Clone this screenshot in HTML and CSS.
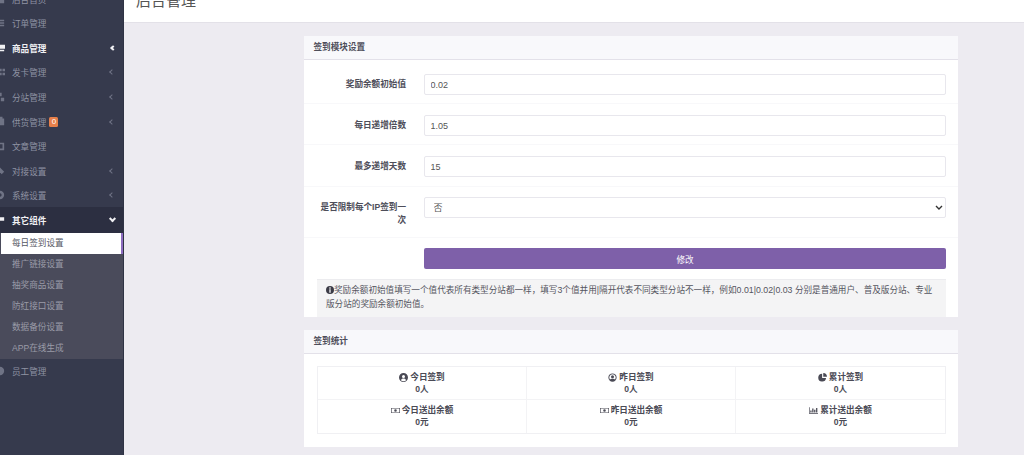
FILE: index.html
```html
<!DOCTYPE html>
<html lang="zh-CN">
<head>
<meta charset="utf-8">
<title>后台管理</title>
<link rel="stylesheet" href="styles.css">
</head>
<body>
<div class="app">
  <nav class="sidebar">
    <a class="item"><svg class="ic" viewBox="0 0 12 12"><path d="M1 6l5-5 5 5v5H1z"/></svg><span>后台首页</span></a>
    <a class="item"><svg class="ic" viewBox="0 0 12 12"><path d="M1 2h10v2H1zM1 5h10v2H1zM1 8h10v2H1z"/></svg><span>订单管理</span></a>
    <a class="item lit"><svg class="ic" viewBox="0 0 12 12"><path d="M0 2h12v5H3v1h8v2H1V4H0z"/></svg><span>商品管理</span><i class="chev left"></i></a>
    <a class="item"><svg class="ic" viewBox="0 0 12 12"><path d="M1 2h3v3H1zM5 2h3v3H5zM9 2h3v3H9zM1 7h3v3H1zM5 7h3v3H5zM9 7h3v3H9z"/></svg><span>发卡管理</span><i class="chev left"></i></a>
    <a class="item"><svg class="ic" viewBox="0 0 12 12"><path d="M4 1h4v4H4zM1 7h4v4H1zM7 7h4v4H7z"/></svg><span>分站管理</span><i class="chev left"></i></a>
    <a class="item"><svg class="ic" viewBox="0 0 12 12"><path d="M1 3h10v8H1zM3 1h6v2H3z"/></svg><span>供货管理</span><b class="badge">0</b><i class="chev left"></i></a>
    <a class="item"><svg class="ic" viewBox="0 0 12 12"><path d="M1 2h10v9H1zM3 4v5h6V4z" fill-rule="evenodd"/></svg><span>文章管理</span></a>
    <a class="item"><svg class="ic" viewBox="0 0 12 12"><path d="M1 3l3-2 7 7-3 3z"/></svg><span>对接设置</span><i class="chev left"></i></a>
    <a class="item"><svg class="ic" viewBox="0 0 12 12"><path d="M6 1a5 5 0 1 0 0 10A5 5 0 0 0 6 1zm0 3a2 2 0 1 1 0 4 2 2 0 0 1 0-4z" fill-rule="evenodd"/></svg><span>系统设置</span><i class="chev left"></i></a>
    <a class="item lit open"><svg class="ic" viewBox="0 0 12 12"><path d="M-1 1h5v3H-1zM-1 8h5v3H-1zM2 3h1v6H2zM3 5h4v2H3zM6 4h5v4H6z"/></svg><span>其它组件</span><i class="chev down"></i></a>
    <div class="submenu">
      <a class="sub current">每日签到设置</a>
      <a class="sub">推广链接设置</a>
      <a class="sub">抽奖商品设置</a>
      <a class="sub">防红接口设置</a>
      <a class="sub">数据备份设置</a>
      <a class="sub">APP在线生成</a>
    </div>
    <a class="item"><svg class="ic" viewBox="0 0 12 12"><path d="M6 1a5 5 0 1 0 0 10A5 5 0 0 0 6 1z"/></svg><span>员工管理</span></a>
  </nav>
  <main class="main">
    <header class="pagehead"><h1>后台管理</h1></header>
    <div class="content">
      <section class="card">
        <h2 class="cardhead">签到模块设置</h2>
        <div class="row first"><label>奖励余额初始值</label><div class="ctl"><input class="field" value="0.02"></div></div>
        <div class="row"><label>每日递增倍数</label><div class="ctl"><input class="field" value="1.05"></div></div>
        <div class="row third"><label>最多递增天数</label><div class="ctl"><input class="field" value="15"></div></div>
        <div class="row tall"><label>是否限制每个IP签到一次</label><div class="ctl"><select class="field sel"><option>否</option></select></div></div>
        <div class="row last"><label></label><div class="ctl"><button class="btn">修改</button></div></div>
        <div class="tip"><svg class="tipic" viewBox="0 0 12 12"><path fill-rule="evenodd" d="M6 0a6 6 0 1 0 0 12A6 6 0 0 0 6 0zM5 2h2v2H5zM5 5h2v5H5z"/></svg>奖励余额初始值填写一个值代表所有类型分站都一样，填写<span class="num">3</span>个值并用<span class="num">|</span>隔开代表不同类型分站不一样，例如<span class="num">0.01|0.02|0.03</span> 分别是普通用户、普及版分站、专业版分站的奖励余额初始值。</div>
      </section>
      <section class="card">
        <h2 class="cardhead">签到统计</h2>
        <div class="statwrap">
          <div class="stats">
            <div class="stat"><div><svg class="si" viewBox="0 0 12 12"><path fill-rule="evenodd" d="M6 0a6 6 0 1 0 0 12A6 6 0 0 0 6 0zm0 2.500a2 2 0 1 1 0 4 2 2 0 0 1 0-4zM2.500 9.500C3 7.800 4.500 7.200 6 7.200s3 .6 3.500 2.300A5 5 0 0 1 6 11a5 5 0 0 1-3.500-1.500z"/></svg>今日签到</div><div>0人</div></div>
            <div class="stat"><div><svg class="si" viewBox="0 0 12 12"><path fill-rule="evenodd" d="M6 .5a5.500 5.500 0 1 0 0 11 5.500 5.500 0 0 0 0-11zm0 1.200a4.300 4.300 0 0 1 3.400 6.900C8.800 7.800 7.500 7.500 6 7.500s-2.800.3-3.400 1.100A4.300 4.300 0 0 1 6 1.700zM6 3a2 2 0 1 0 0 4 2 2 0 0 0 0-4z"/></svg>昨日签到</div><div>0人</div></div>
            <div class="stat"><div><svg class="si" viewBox="0 0 12 12"><path d="M5.500 1a5.200 5.200 0 1 0 5.200 5.700H5.500zM7 0v5h5a5.200 5.200 0 0 0-5-5z"/></svg>累计签到</div><div>0人</div></div>
            <div class="stat"><div><svg class="si" viewBox="0 0 14 12"><path fill-rule="evenodd" d="M0 2h14v8H0zM1 3v6h12V3zM7 4a2 2 0 1 1 0 4 2 2 0 0 1 0-4z"/></svg>今日送出余额</div><div>0元</div></div>
            <div class="stat"><div><svg class="si" viewBox="0 0 14 12"><path fill-rule="evenodd" d="M0 2h14v8H0zM1 3v6h12V3zM7 4a2 2 0 1 1 0 4 2 2 0 0 1 0-4z"/></svg>昨日送出余额</div><div>0元</div></div>
            <div class="stat"><div><svg class="si" viewBox="0 0 14 12"><path d="M0 1h1v9h13v1H0zM2 6h2v3H2zM5 3h2v6H5zM8 5h2v4H8zM11 2h2v7h-2z"/></svg>累计送出余额</div><div>0元</div></div>
          </div>
        </div>
      </section>
    </div>
  </main>
</div>
</body>
</html>
```

FILE: styles.css
```css
* { box-sizing: border-box; }
html, body { margin: 0; padding: 0; height: 100%; overflow: hidden; }
body {
  background: #edebf1;
  font-family: "Liberation Sans", "Noto Sans CJK SC", sans-serif;
  font-size: 8.600px;
  color: #4a4a55;
}
.app { display: flex; height: 455px; overflow: hidden; }

.sidebar {
  flex: 0 0 124px;
  width: 124px;
  margin-top: -13.500px;
  height: 469px;
  background: #363a4d;
  border-right: 1px solid #2f3344;
  color: #8f93a3;
}
.item {
  display: flex;
  align-items: center;
  height: 24.550px;
  padding-left: 12px;
  position: relative;
}
.ic {
  position: absolute;
  left: -5px;
  top: 7px;
  width: 10px;
  height: 10px;
  fill: #6f7385;
}
.item.lit { color: #f1f1f4; font-weight: 700; }
.item.lit .ic { fill: #f1f1f4; }
.item.open { background: #2c2f41; height: 26px; }
.chev {
  position: absolute;
  right: 9px;
  top: 50%;
  width: 4px;
  height: 4px;
  border-left: 1px solid #6f7385;
  border-bottom: 1px solid #6f7385;
}
.chev.left { transform: translateY(-50%) rotate(45deg); }
.item.lit .chev { border-width: 2px; right: 8px; border-color: #f1f1f4; }
.chev.down { transform: translateY(-75%) rotate(-45deg); width: 5px; height: 5px; }
.badge {
  margin-left: 3px;
  width: 9px;
  height: 10px;
  line-height: 10px;
  text-align: center;
  border-radius: 1.500px;
  background: #e8804a;
  color: #fff;
  font-size: 8px;
  font-weight: 400;
}
.submenu { background: #4a4b5b; }
.sub {
  display: block;
  height: 20.900px;
  line-height: 20.900px;
  padding-left: 12px;
  color: #9a9ba8;
}
.sub.current {
  margin-left: 1px;
  padding-left: 11px;
  background: #fff;
  color: #555763;
  border-right: 2px solid #8d6cc0;
}

.main { flex: 1; min-width: 0; }
.pagehead {
  height: 23px;
  background: #fff;
  border-bottom: 1px solid #e3e1e8;
  overflow: hidden;
  padding-left: 12px;
}
.pagehead h1 {
  margin: -9px 0 0;
  font-size: 15px;
  line-height: 20px;
  font-weight: 400;
  color: #555;
}
.content { padding: 13px 66px 0 180px; }
.card { background: #fff; margin-bottom: 13px; }
.cardhead {
  margin: 0;
  height: 24px;
  line-height: 22px;
  padding-left: 9.500px;
  background: #f8f8fb;
  border-bottom: 1px solid #e3e1e9;
  font-size: 8.600px;
  font-weight: 700;
  color: #4e4e5a;
}
.row {
  display: flex;
  height: 41px;
  align-items: flex-start;
  padding-top: 11px;
  border-bottom: 1px solid #f8f8fa;
}
.row.first { height: 44px; padding-top: 14px; }
.row.third { height: 42px; }
.row.tall { height: 51px; padding-top: 10px; }
.row.last { border-bottom: 0; padding-top: 10px; }
.row label {
  flex: 0 0 102px;
  text-align: right;
  font-weight: 700;
  line-height: 13px;
  padding-top: 4px;
  color: #4e4e5a;
}
.row.tall label { padding-top: 4px; padding-left: 14px; }
.ctl { flex: 1; margin: 0 12px 0 18px; }
.field {
  display: block;
  width: 100%;
  height: 21px;
  padding: 0 5.500px;
  border: 1px solid #e8e7ed;
  border-radius: 2px;
  background: #fff;
  font: inherit;
  font-size: 9px;
  color: #555;
}
.sel {
  padding-left: 8.500px;
  appearance: none;
  background: #fff url("data:image/svg+xml,%3Csvg xmlns='http://www.w3.org/2000/svg' viewBox='0 0 8 5'%3E%3Cpath d='M1 1l3 3 3-3' fill='none' stroke='%23333' stroke-width='1.400'/%3E%3C/svg%3E") no-repeat right 2px center / 8px 5px;
}
.btn {
  display: block;
  width: 100%;
  height: 21px;
  border: 0;
  border-radius: 2px;
  background: #7e60a9;
  color: #fff;
  font: inherit;
  font-size: 8.600px;
}
.tip {
  margin: 0 12px 0 13px;
  padding: 4px 9px 0;
  background: #f4f4f5;
  border-top: 1px solid #ececef;
  line-height: 13.500px;
  color: #555560;
  height: 38px;
}
.num { font-size: 8.800px; }
.tipic { width: 8px; height: 8px; vertical-align: -1px; fill: #3b3b46; }
.statwrap { padding: 12px 12px 13px 13px; }
.stats {
  display: grid;
  grid-template-columns: repeat(3, 1fr);
  border: 1px solid #f0f0f3;
}
.stat {
  height: 33px;
  padding-top: 4px;
  text-align: center;
  font-weight: 700;
  line-height: 12px;
  color: #4a4a55;
  border-right: 1px solid #f3f3f5;
  border-bottom: 1px solid #f3f3f5;
}
.stat:nth-child(3n) { border-right: 0; }
.stat:nth-child(n+4) { border-bottom: 0; }
.si { width: 9px; height: 9px; margin-right: 2px; vertical-align: -1.500px; fill: #4a4a55; }
```
